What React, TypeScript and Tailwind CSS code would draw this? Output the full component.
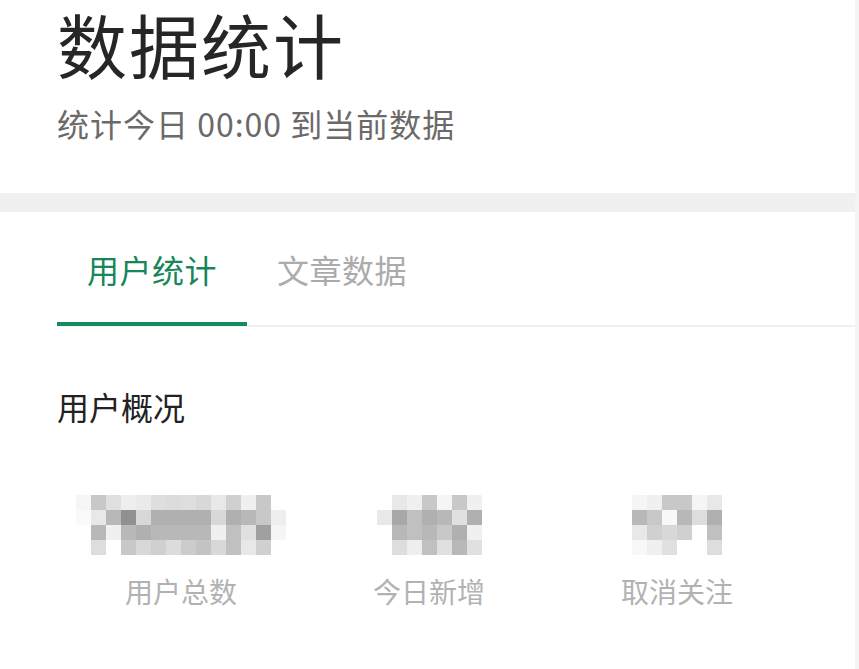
import React from "react";

const block1: string[][] = [
  ["#f6f6f6", "#c8c8c8", "#e0e0e0", "#eeeeee", "#eaeaea", "#dedede", "#dcdcdc", "#dedede", "#d8d8d8", "#e8e8e8", "#d0d0d0", "#f0f0f0", "#c8c8c8", "#ffffff"],
  ["#fafafa", "#e8e8e8", "#b8b8b8", "#909090", "#d8d8d8", "#b0b0b0", "#b0b0b0", "#b0b0b0", "#b0b0b0", "#d8d8d8", "#b0b0b0", "#b8b8b8", "#c8c8c8", "#eeeeee"],
  ["#ffffff", "#b8b8b8", "#f0f0f0", "#b8b8b8", "#b0b0b0", "#b8b8b8", "#b8b8b8", "#b8b8b8", "#b8b8b8", "#f0f0f0", "#c0c0c0", "#e0e0e0", "#a0a0a0", "#f5f5f5"],
  ["#ffffff", "#dddddd", "#ffffff", "#c8c8c8", "#d8d8d8", "#d0d0d0", "#dcdcdc", "#cccccc", "#c4c4c4", "#d8d8d8", "#c0c0c0", "#e8e8e8", "#d0d0d0", "#ffffff"],
];

const block2: string[][] = [
  ["#ffffff", "#e8e8e8", "#f0f0f0", "#c8c8c8", "#f5f5f5", "#c8c8c8", "#f0f0f0"],
  ["#e8e8e8", "#a8a8a8", "#c0c0c0", "#b0b0b0", "#b8b8b8", "#e0e0e0", "#b0b0b0"],
  ["#ffffff", "#b8b8b8", "#c0c0c0", "#b8b8b8", "#c8c8c8", "#b0b0b0", "#f0f0f0"],
  ["#ffffff", "#dddddd", "#eeeeee", "#c0c0c0", "#e0e0e0", "#b8b8b8", "#e0e0e0"],
];

const block3: string[][] = [
  ["#f5f5f5", "#f0f0f0", "#c8c8c8", "#c8c8c8", "#f5f5f5", "#e8e8e8"],
  ["#b8b8b8", "#c8c8c8", "#f8f8f8", "#b8b8b8", "#dddddd", "#b0b0b0"],
  ["#e8e8e8", "#d0d0d0", "#d8d8d8", "#d0d0d0", "#ffffff", "#c0c0c0"],
  ["#f8f8f8", "#f0f0f0", "#e0e0e0", "#ffffff", "#ffffff", "#dddddd"],
];

function Mosaic({ cells }: { cells: string[][] }) {
  return (
    <div className="flex flex-col">
      {cells.map((row, r) => (
        <div key={r} className="flex">
          {row.map((c, i) => (
            <div key={i} className="h-[15px] w-[15px]" style={{ backgroundColor: c }} />
          ))}
        </div>
      ))}
    </div>
  );
}

function Stat({ cells, label }: { cells: string[][]; label: string }) {
  return (
    <div className="flex flex-col items-center">
      <Mosaic cells={cells} />
      <div className="mt-[22px] text-[28px] leading-[28px] text-[#b2b2b2]">{label}</div>
    </div>
  );
}

export default function App() {
  return (
    <div
      className="h-[669px] w-[859px] overflow-hidden bg-white border-r-4 border-[#f4f4f4]"
      style={{ fontFamily: '"Noto Sans CJK SC", "Noto Sans", sans-serif' }}
    >
      <div className="pl-[57px] pt-[4px] pb-[54px]">
        <div className="text-[70px] leading-[80px] tracking-[2px] text-[#262626]">数据统计</div>
        <div className="mt-[23px] text-[32px] leading-[32px] tracking-[1px] text-[#6a6a6a]">统计今日 00:00 到当前数据</div>
      </div>
      <div className="h-[19px] bg-[#f0f0f0]" />
      <div className="ml-[57px] mt-[41px] flex border-b-2 border-[#f0f0f0]">
        <div className="flex w-[190px] flex-col items-center">
          <div className="text-[32px] leading-[32px] tracking-[0.5px] text-[#17875a]">用户统计</div>
          <div className="mt-[37px] -mb-[1px] h-[4px] w-full bg-[#1a8a5e]" />
        </div>
        <div className="flex w-[190px] flex-col items-center">
          <div className="text-[32px] leading-[32px] tracking-[0.5px] text-[#ababab]">文章数据</div>
        </div>
      </div>
      <div className="pl-[57px]">
        <div className="mt-[63px] text-[32px] leading-[32px] text-[#222222]">用户概况</div>
        <div className="mt-[73px] grid w-[744px] grid-cols-3">
          <Stat cells={block1} label="用户总数" />
          <Stat cells={block2} label="今日新增" />
          <Stat cells={block3} label="取消关注" />
        </div>
      </div>
    </div>
  );
}
